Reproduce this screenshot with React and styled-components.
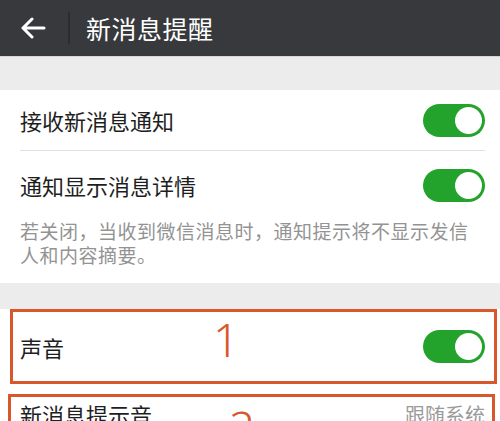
import styled, { createGlobalStyle } from 'styled-components';

const GlobalStyle = createGlobalStyle`
  html, body {
    margin: 0;
    padding: 0;
    background: #ececec;
  }
  body {
    width: 500px;
    height: 421px;
    overflow: hidden;
    font-family: "Noto Sans CJK SC", "Noto Sans", sans-serif;
  }
`;

const Page = styled.div`
  width: 500px;
  display: flex;
  flex-direction: column;
`;

const TopBar = styled.header`
  height: 57px;
  background: #38393d;
  display: flex;
  align-items: center;
  border-bottom: 1px solid #d6d6d6;
  box-sizing: border-box;
`;

const BackButton = styled.div`
  width: 68px;
  height: 100%;
  display: flex;
  align-items: center;
  padding-left: 20px;
  box-sizing: border-box;
`;

const Divider = styled.span`
  width: 2px;
  height: 32px;
  background: #2b2c2f;
`;

const Title = styled.h1`
  margin: 0 0 0 16px;
  color: #ffffff;
  font-size: 25px;
  font-weight: 400;
  letter-spacing: 0.5px;
`;

const Spacer = styled.div`
  height: ${(p) => p.h}px;
  background: #ececec;
`;

const Group = styled.section`
  background: #ffffff;
  display: flex;
  flex-direction: column;
`;

const Row = styled.div`
  position: relative;
  height: ${(p) => p.h}px;
  margin: 0 15px 0 20px;
  display: flex;
  align-items: center;
  justify-content: space-between;
  border-bottom: ${(p) => (p.line ? '1px solid #e0e0e0' : 'none')};
`;

const Label = styled.span`
  font-size: 22px;
  color: #1e1e1e;
`;

const Value = styled.span`
  font-size: 20px;
  color: #9a9a9a;
`;

const Note = styled.p`
  margin: 0;
  padding: 0 24px 16px 20px;
  font-size: 19px;
  line-height: 24px;
  letter-spacing: 0.5px;
  color: #939393;
`;

const Toggle = styled.span`
  width: 62px;
  height: 33px;
  border-radius: 17px;
  background: #23a32b;
  position: relative;
  flex: none;

  &::after {
    content: '';
    position: absolute;
    right: 3px;
    top: 3px;
    width: 27px;
    height: 27px;
    border-radius: 50%;
    background: #ffffff;
  }
`;

const Mark = styled.div`
  position: absolute;
  left: ${(p) => p.l}px;
  right: ${(p) => p.r}px;
  top: ${(p) => p.t}px;
  bottom: ${(p) => p.b}px;
  border: 3px solid #d9582b;
  pointer-events: none;
`;

const MarkNum = styled.span`
  position: absolute;
  left: ${(p) => p.x}px;
  top: ${(p) => p.y}px;
  font-family: "Noto Sans", sans-serif;
  font-weight: 300;
  font-size: 46px;
  line-height: 1;
  color: #d9582b;
`;

const BackArrow = () => (
  <svg width="26" height="22" viewBox="0 0 26 22">
    <path
      d="M24 11H3M12 2L3 11l9 9"
      fill="none"
      stroke="#ffffff"
      strokeWidth="3"
      strokeLinecap="round"
      strokeLinejoin="round"
    />
  </svg>
);

export default function App() {
  return (
    <Page>
      <GlobalStyle />
      <TopBar>
        <BackButton>
          <BackArrow />
        </BackButton>
        <Divider />
        <Title>新消息提醒</Title>
      </TopBar>
      <Spacer h={33} />
      <Group>
        <Row h={60} line>
          <Label>接收新消息通知</Label>
          <Toggle />
        </Row>
        <Row h={68}>
          <Label>通知显示消息详情</Label>
          <Toggle />
        </Row>
        <Note>若关闭，当收到微信消息时，通知提示将不显示发信人和内容摘要。</Note>
      </Group>
      <Spacer h={26} />
      <Group>
        <Row h={75}>
          <Label>声音</Label>
          <Toggle />
          <Mark l={-10} r={-12} t={0} b={0}>
            <MarkNum x={200} y={4}>1</MarkNum>
          </Mark>
        </Row>
        <Row h={60}>
          <Label>新消息提示音</Label>
          <Value>跟随系统</Value>
          <Mark l={-12} r={-10} t={10} b={-20}>
            <MarkNum x={218} y={7}>2</MarkNum>
          </Mark>
        </Row>
      </Group>
    </Page>
  );
}
